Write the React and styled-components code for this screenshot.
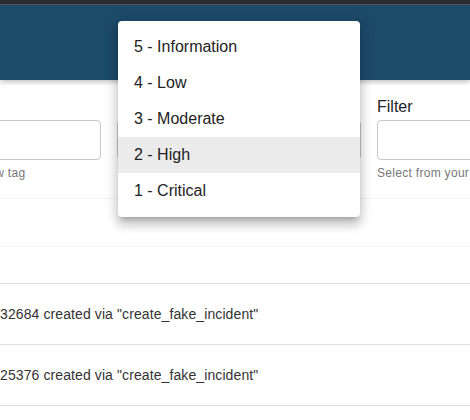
import styled, { createGlobalStyle } from "styled-components";

const GlobalStyle = createGlobalStyle`
  html, body {
    margin: 0;
    padding: 0;
    background: #fff;
    font-family: "Liberation Sans", Arial, sans-serif;
    overflow: hidden;
  }
`;

const Page = styled.div`
  position: relative;
  width: 470px;
  height: 420px;
  overflow: hidden;
`;

const TopBar = styled.div`
  height: 4px;
  background: #2c2c2f;
  border-bottom: 1px solid #57595c;
`;

const Header = styled.div`
  height: 75px;
  background: #1c4a69;
  box-shadow: 0 2px 5px rgba(0, 0, 0, 0.25);
  position: relative;
  z-index: 1;
`;

const FormRow = styled.div`
  display: flex;
  gap: 16px;
  margin-left: -99px;
  padding-top: 16px;
  height: 119px;
  box-sizing: border-box;
  border-bottom: 1px solid #f3f3f3;
`;

const Field = styled.div`
  display: flex;
  flex-direction: column;
  width: ${(p) => p.$width}px;
  flex-shrink: 0;
`;

const Label = styled.label`
  font-size: 16px;
  line-height: 22px;
  color: #222;
  height: 24px;
`;

const Input = styled.div`
  height: 40px;
  box-sizing: border-box;
  border: 1px solid #c8c8c8;
  border-radius: 4px;
  background: #fff;
`;

const Helper = styled.div`
  margin-top: 6px;
  font-size: 12px;
  color: #777;
  white-space: nowrap;
  letter-spacing: 0.3px;
`;

const EmptyRow = styled.div`
  height: ${(p) => p.$h}px;
  border-bottom: 1px solid ${(p) => p.$line};
`;

const Row = styled.div`
  height: 60px;
  display: flex;
  align-items: center;
  border-bottom: 1px solid #dddddd;
  font-size: 14px;
  letter-spacing: 0.1px;
  color: #333;
  white-space: nowrap;
`;

const Menu = styled.ul`
  position: absolute;
  left: 118px;
  top: 21px;
  width: 242px;
  margin: 0;
  padding: 8px 0;
  list-style: none;
  background: #fff;
  border-radius: 4px;
  z-index: 5;
  box-shadow: 0 5px 5px -3px rgba(0, 0, 0, 0.2),
    0 8px 10px 1px rgba(0, 0, 0, 0.14), 0 3px 14px 2px rgba(0, 0, 0, 0.12);
`;

const MenuItem = styled.li`
  height: 36px;
  display: flex;
  align-items: center;
  padding: 0 16px;
  font-size: 16px;
  color: #222;
  background: ${(p) => (p.$active ? "#ebebeb" : "transparent")};
`;

const severities = [
  "5 - Information",
  "4 - Low",
  "3 - Moderate",
  "2 - High",
  "1 - Critical",
];

const incidents = ["32684", "25376"];

const App = () => {
  return (
    <Page>
      <GlobalStyle />
      <TopBar />
      <Header />
      <FormRow>
        <Field $width={200}>
          <Label>Tags</Label>
          <Input />
          <Helper>Type to add a new tag</Helper>
        </Field>
        {/* severity select, covered by its open menu */}
        <Field $width={244}>
          <Label />
          <Input />
        </Field>
        <Field $width={220}>
          <Label>Filter</Label>
          <Input />
          <Helper>Select from your saved filters</Helper>
        </Field>
      </FormRow>
      <EmptyRow $h={47} $line="#f3f3f3" />
      <EmptyRow $h={36} $line="#dddddd" />
      {incidents.map((id) => (
        <Row key={id}>{id} created via "create_fake_incident"</Row>
      ))}
      <Menu>
        {severities.map((s) => (
          <MenuItem key={s} $active={s === "2 - High"}>
            {s}
          </MenuItem>
        ))}
      </Menu>
    </Page>
  );
};

export default App;
